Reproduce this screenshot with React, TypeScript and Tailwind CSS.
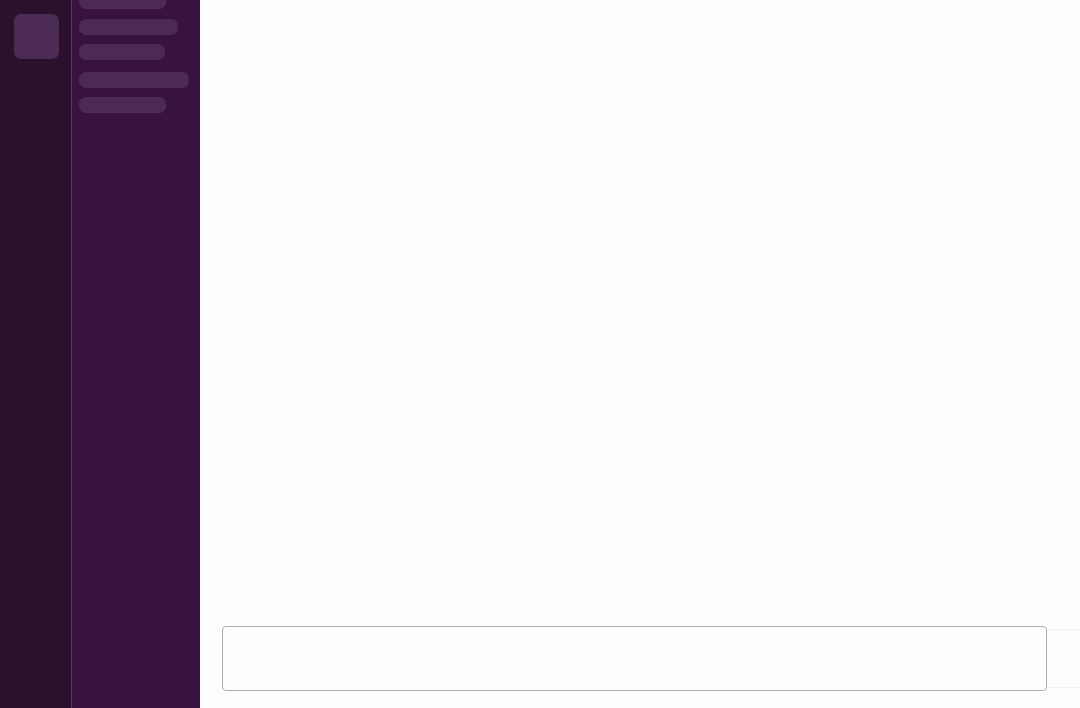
import React from "react";

const bars = [
    { w: "w-[87px]", mt: "mt-[-7px]" },
    { w: "w-[99px]", mt: "mt-[10px]" },
    { w: "w-[86px]", mt: "mt-[9px]" },
    { w: "w-[110px]", mt: "mt-[12px]" },
    { w: "w-[87px]", mt: "mt-[9px]" },
];

export default function App() {
    return (
        <div className="flex h-[708px] w-[1080px] overflow-hidden bg-[#fdfdfd]" style={{ fontFamily: "Lato, sans-serif" }}>
            {/* Workspace rail */}
            <div className="w-[72px] shrink-0 bg-[#2c112d] border-r border-[#5b3d60] pt-[14px] pl-[14px]">
                <div className="w-[45px] h-[45px] rounded-[7px] bg-[#4b2b54]" />
            </div>

            {/* Channel sidebar skeleton */}
            <div className="w-[128px] shrink-0 bg-[#39133f] flex flex-col pl-[7px]">
                {bars.map((b, i) => (
                    <div key={i} className={`${b.w} ${b.mt} h-[16px] rounded-[7px] bg-[#4b2b54]`} />
                ))}
            </div>

            {/* Main area */}
            <div className="flex-1 flex flex-col">
                <div className="flex-1" />
                <div className="flex items-stretch pl-[22px] pb-[17px] h-[82px]">
                    <div className="flex-1 rounded-[4px] border border-[#acacac] bg-[#fdfdfd]" />
                    <div className="w-[31px] ml-[2px] my-[3px] border-y border-[#f1f1f1]" />
                </div>
            </div>
        </div>
    );
}
